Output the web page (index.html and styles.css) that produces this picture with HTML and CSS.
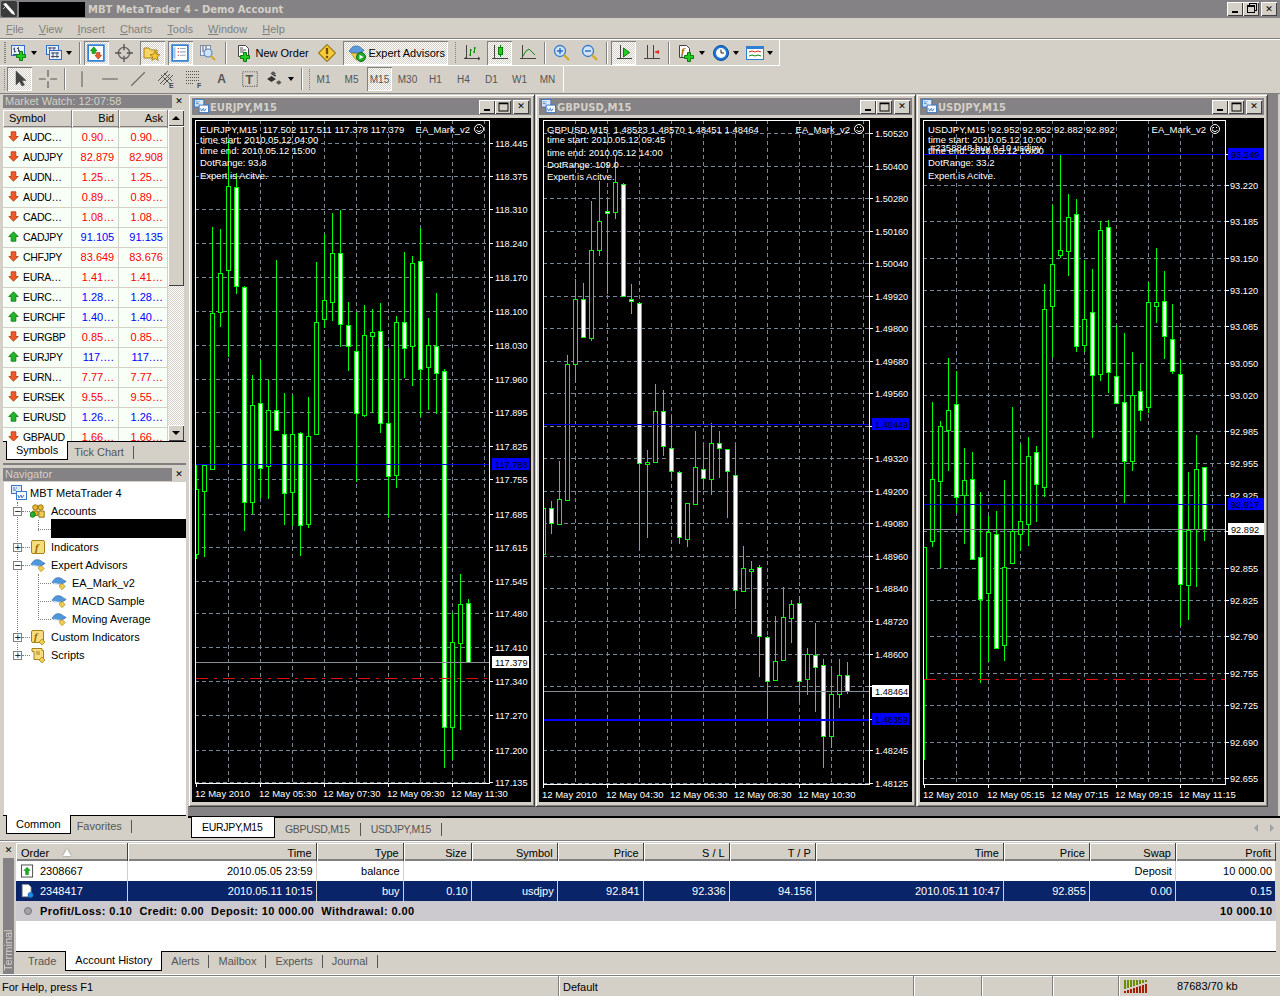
FILE: index.html
```html
<!DOCTYPE html>
<html lang="en">
<head>
  <meta charset="UTF-8" />
  <title>MBT MetaTrader 4 - Demo Account</title>
  <link rel="stylesheet" href="styles.css">
</head>
<body>
  <svg class="sprite">
    <symbol id="i-app" viewBox="0 0 16 16"><rect width="16" height="16" rx="2" fill="#3a3a3a"/><path d="M2 3l3-1 8 9 1 3-3-1z" fill="#fff"/><path d="M2 8l3-3" stroke="#bbb"/></symbol>
    <symbol id="i-logo" viewBox="0 0 16 16"><rect x=".5" y=".5" width="10" height="8" fill="#dfeaf8" stroke="#3a78c8"/><rect x="5.5" y="6.5" width="10" height="8" fill="#fff" stroke="#3a78c8"/><path d="M2 3h2M5 3h1M2 5h3M7 10l1 3 2-3 1 3 2-3" stroke="#3a78c8" fill="none"/></symbol>
    <symbol id="i-new" viewBox="0 0 18 18"><rect x="1.5" y="1.5" width="13" height="10" fill="#e8f0fc" stroke="#2f6fc4"/><path d="M4.5 3.5v5M3 5h1.5M4.5 7.5H6M8.5 3v5M7 4.5h1.5M8.5 6.5H10M3 10.5h10" stroke="#456" fill="none"/><path d="M9.5 7.5h3v3h3v3h-3v3h-3v-3h-3v-3h3z" fill="#22cc22" stroke="#0a7d0a"/></symbol>
    <symbol id="i-prof" viewBox="0 0 18 18"><rect x="1.5" y="1.5" width="12" height="9" fill="#e8f0fc" stroke="#2f6fc4"/><path d="M3 4h8M5 3v3M9 3v3" stroke="#456"/><rect x="4.5" y="6.5" width="12" height="9" fill="#e8f0fc" stroke="#2f6fc4"/><path d="M6 9h8M6 12.5h8M8 8v6M12 8v6" stroke="#456"/></symbol>
    <symbol id="i-mw" viewBox="0 0 16 16"><rect x="1" y="1" width="14" height="14" fill="#fff" stroke="#2f7fd4" stroke-width="1.5"/><path d="M6 2.5l3 3.5H7.5v2.5h-3V6H3z" fill="#1cb01c" stroke="#0a6d0a" stroke-width=".5"/><path d="M10 13.5L7 10h1.5V7.5h3V10H13z" fill="#ef5a2a" stroke="#a02a0a" stroke-width=".5"/></symbol>
    <symbol id="i-target" viewBox="0 0 16 16"><circle cx="8" cy="8" r="5" fill="none" stroke="#666" stroke-width="1.3"/><path d="M8 0v5.5M8 10.5V16M0 8h5.5M10.5 8H16" stroke="#555" stroke-width="1.2"/></symbol>
    <symbol id="i-folder" viewBox="0 0 18 16"><path d="M1 3h5l2 2h6v8H1z" fill="#f6d465" stroke="#a8801a"/><path d="M12 6l1.5 3.2 3.5.4-2.600 2.300.8 3.500-3.200-1.800-3.200 1.800.8-3.500-2.600-2.300 3.500-.4z" fill="#f2c531" stroke="#8e6d12" stroke-width=".7"/></symbol>
    <symbol id="i-term" viewBox="0 0 16 16"><rect x="1" y="1" width="14" height="14" fill="#fff" stroke="#2f7fd4" stroke-width="1.5"/><path d="M3 3v10" stroke="#9cc4ee" stroke-width="2"/><path d="M6 4h1M6 7h1M6 10h1" stroke="#d03020"/><path d="M8 4h5M8 7h5M8 10h5" stroke="#9ca8c0"/></symbol>
    <symbol id="i-test" viewBox="0 0 18 18"><rect x="1.5" y="1.5" width="10" height="10" fill="#eef2fa" stroke="#7a8ba8"/><path d="M4 2v6M7 2v6" stroke="#556"/><circle cx="9" cy="9" r="4" fill="#cfe4fa" stroke="#5b88c0" stroke-width="1.2"/><path d="M12 12l4 4" stroke="#d8a820" stroke-width="2"/></symbol>
    <symbol id="i-order" viewBox="0 0 16 18"><path d="M2.5 1.5h7l3 3v8h-10z" fill="#fff" stroke="#444"/><path d="M4 6h6M4 8h4M4 4h3" stroke="#555"/><path d="M7.5 8.5h3v3h3v3h-3v3h-3v-3h-3v-3h3z" fill="#22cc22" stroke="#0a7d0a"/></symbol>
    <symbol id="i-warn" viewBox="0 0 16 16"><path d="M8 .5L15.5 8 8 15.5.5 8z" fill="#f5cc3c" stroke="#9c7a10"/><path d="M8 3.5V9" stroke="#7a4a00" stroke-width="2"/><path d="M8 10.5v2" stroke="#7a4a00" stroke-width="2"/></symbol>
    <symbol id="i-ea" viewBox="0 0 18 18"><path d="M1 7c2-1 2-5 7-5s5 3 8 4c-1 2-4 3-7 3S2 9 1 7z" fill="#5a9ad8" stroke="#2a5f98" stroke-width=".7"/><path d="M3 9l5 7 3-1 3-5z" fill="#f0cc50" stroke="#a08018" stroke-width=".7"/><circle cx="13" cy="13" r="4.5" fill="#22a92e" stroke="#0c6e14"/><path d="M11.5 10.8l4 2.2-4 2.2z" fill="#fff"/></symbol>
    <symbol id="i-hat" viewBox="0 0 18 16"><path d="M1 7c2-1 2-5 7-5s5 3 9 4c-1 2-5 3-8 3S2 9 1 7z" fill="#4f97dc" stroke="#2a5f98" stroke-width=".7"/><path d="M3 8c2 1 6 2 8 1" stroke="#f0f6ff" fill="none"/><path d="M10 9.5l3-.5 3 3-3.5 3.5-3-3z" fill="#f0cc50" stroke="#a08018" stroke-width=".7"/></symbol>
    <symbol id="i-bars" viewBox="0 0 18 18"><path d="M3.5 1v14M1 14.5h16M3 13l-1.5 2M15 13l2 1.5-2 1.5" stroke="#444" fill="none"/><path d="M7.5 5v7M7.5 11H6M7.5 6H9M11.5 3v6M11.5 8H10M11.5 4H13" stroke="#0a8a0a" fill="none"/></symbol>
    <symbol id="i-candle" viewBox="0 0 18 18"><path d="M3.5 1v14M1 14.5h16" stroke="#444" fill="none"/><path d="M9.5 1v12" stroke="#0a8a0a"/><rect x="7.5" y="3.5" width="4" height="7" fill="#22cc22" stroke="#0a7d0a"/></symbol>
    <symbol id="i-line" viewBox="0 0 18 18"><path d="M3.5 1v14M1 14.5h16" stroke="#444" fill="none"/><path d="M4 12l3-5 3-2 3 3 3 3" stroke="#0a8a0a" fill="none"/></symbol>
    <symbol id="i-zin" viewBox="0 0 18 18"><circle cx="7" cy="7" r="5.5" fill="#cfe4fa" stroke="#3a78c8" stroke-width="1.3"/><path d="M4 7h6M7 4v6" stroke="#2a68b8" stroke-width="1.4"/><path d="M11 11l5 5" stroke="#d8a820" stroke-width="2.4"/></symbol>
    <symbol id="i-zout" viewBox="0 0 18 18"><circle cx="7" cy="7" r="5.5" fill="#cfe4fa" stroke="#3a78c8" stroke-width="1.3"/><path d="M4 7h6" stroke="#2a68b8" stroke-width="1.4"/><path d="M11 11l5 5" stroke="#d8a820" stroke-width="2.4"/></symbol>
    <symbol id="i-auto" viewBox="0 0 18 18"><path d="M5.5 1v14M2 14.5h15" stroke="#444" fill="none"/><path d="M8.5 4l6 4.500-6 4.500z" fill="#22cc22" stroke="#0a7d0a"/></symbol>
    <symbol id="i-shift" viewBox="0 0 18 18"><path d="M4.5 1v14M1 14.5h16M10.5 1v14" stroke="#444" fill="none"/><path d="M11 8l5-2v4z" fill="#e03020"/></symbol>
    <symbol id="i-ind" viewBox="0 0 18 18"><path d="M1.5 1.5h7l3 3v9h-10z" fill="#fff" stroke="#444"/><text class="ic-f" x="3" y="11">f</text><path d="M9.5 8.5h3v3h3v3h-3v3h-3v-3h-3v-3h3z" fill="#22cc22" stroke="#0a7d0a"/></symbol>
    <symbol id="i-clock" viewBox="0 0 18 18"><circle cx="9" cy="9" r="7.5" fill="#1e78d8" stroke="#124a90"/><circle cx="9" cy="9" r="5" fill="#fff"/><path d="M9 5.5V9h3" stroke="#222" fill="none"/></symbol>
    <symbol id="i-tpl" viewBox="0 0 18 16"><rect x=".5" y="1.5" width="17" height="13" fill="#fff" stroke="#2f7fd4"/><path d="M1 3h16" stroke="#2f7fd4" stroke-width="2"/><path d="M3 7l3-1 3 1 3-1 3 1" stroke="#d03020" fill="none"/><path d="M3 11l3-1 3 1 3-1 3 1" stroke="#0a8a0a" fill="none"/></symbol>
    <symbol id="i-cursor" viewBox="0 0 16 18"><path d="M4 1v14l3.5-3.5L10 16l2.500-1-2.500-4.500h4z" fill="#444" stroke="#444" stroke-width=".5"/></symbol>
    <symbol id="i-cross" viewBox="0 0 16 16"><path d="M8 0v6M8 10v6M0 8h6M10 8h6" stroke="#555"/></symbol>
    <symbol id="i-vline" viewBox="0 0 16 16"><path d="M8 1v14" stroke="#666"/></symbol>
    <symbol id="i-hline" viewBox="0 0 16 16"><path d="M1 8h14" stroke="#666"/></symbol>
    <symbol id="i-trend" viewBox="0 0 16 16"><path d="M2 14L14 2" stroke="#666"/></symbol>
    <symbol id="i-chan" viewBox="0 0 18 18"><path d="M1 11L11 1M3 14L13 4M6 15L16 5M4 5l9 9M7 3l8 8" stroke="#555" fill="none"/><text class="ic-tag" x="12" y="18">E</text></symbol>
    <symbol id="i-fibo" viewBox="0 0 18 18"><path d="M1 1.5h13M1 4.5h13M1 7.5h13M1 10.5h13M1 13.5h8" stroke="#555" stroke-dasharray="1 1"/><text class="ic-tag" x="12" y="18">F</text></symbol>
    <symbol id="i-tbox" viewBox="0 0 16 16"><rect x="1.5" y="1.5" width="13" height="13" fill="none" stroke="#666" stroke-dasharray="1 1"/><text class="ic-t" x="4" y="12.5">T</text></symbol>
    <symbol id="i-arrows" viewBox="0 0 16 16"><path d="M3 3l2.5-2L8 3 5.5 5zM8 11l2.500-2 2.500 2-2.500 2z" fill="#555"/><path d="M1 8l3-2 3 2-3 2zM6 5h2" fill="#333" stroke="#333"/></symbol>
    <symbol id="i-down" viewBox="0 0 14 14"><path d="M7 13L1 7h3V1h6v6h3z" fill="#ef5a2a" stroke="#a8380f"/></symbol>
    <symbol id="i-up" viewBox="0 0 14 14"><path d="M7 1l6 6h-3v6H4V7H1z" fill="#21b52a" stroke="#0c7012"/></symbol>
    <symbol id="i-people" viewBox="0 0 18 16"><circle cx="6" cy="4" r="3" fill="#e8b828" stroke="#8a6a10"/><circle cx="12" cy="4" r="3" fill="#e8b828" stroke="#8a6a10"/><path d="M3 8h6v5H3z" fill="#e8b828" stroke="#8a6a10"/><path d="M10 8h6v7h-6z" fill="#f0cc50" stroke="#8a6a10"/><circle cx="3" cy="12" r="3" fill="#22b52e" stroke="#0c7012"/></symbol>
    <symbol id="i-fbook" viewBox="0 0 16 16"><rect x="1.5" y="1.5" width="13" height="13" rx="1.5" fill="#f6de80" stroke="#a8801a"/><text class="ic-fb" x="5" y="12">f</text></symbol>
    <symbol id="i-fcust" viewBox="0 0 16 16"><rect x="1.5" y="1.5" width="12" height="12" rx="1.5" fill="#f6de80" stroke="#a8801a"/><text class="ic-fb" x="4" y="11">f</text><path d="M12 10l3 3-3 3-3-3z" fill="#f0cc50" stroke="#a08018" stroke-width=".7"/></symbol>
    <symbol id="i-script" viewBox="0 0 16 16"><path d="M2 1.5h10v2h1.5v8h-2.500M2 1.5v3H4v8h8" fill="#f6de80" stroke="#a8801a"/><path d="M6 5h4M6 7h4" stroke="#a8801a"/><path d="M12 10l3 3-3 3-3-3z" fill="#f0cc50" stroke="#a08018" stroke-width=".7"/></symbol>
    <symbol id="i-balance" viewBox="0 0 14 14"><rect x=".5" y=".5" width="12" height="13" fill="#fff" stroke="#444"/><path d="M6.5 3l3.5 3.5H8V11H5V6.5H3z" fill="#1cb01c" stroke="#0a6d0a" stroke-width=".5"/></symbol>
    <symbol id="i-doc" viewBox="0 0 14 16"><path d="M1 .5h7l3 3v11H1z" fill="#fff" stroke="#999"/><circle cx="10.5" cy="12.5" r="3" fill="#1c90e8" stroke="#0a5aa8" stroke-width=".6"/></symbol>
    <symbol id="i-gray" viewBox="0 0 10 10"><circle cx="5" cy="5" r="3.5" fill="#a4a2a8" stroke="#777"/></symbol>
  </svg>

  <div class="titlebar">
    <svg class="app-icon"><use href="#i-app"/></svg>
    <span class="redact"></span>
    <span>MBT MetaTrader 4 - Demo Account</span>
    <div class="winbtns main-btns">
      <span class="wbtn"><i class="g-min"></i></span>
      <span class="wbtn"><i class="g-rest"></i></span>
      <span class="wbtn close-gap"><i class="g-x">✕</i></span>
    </div>
  </div>

  <div class="menubar">
    <span><u>F</u>ile</span>
    <span><u>V</u>iew</span>
    <span><u>I</u>nsert</span>
    <span><u>C</u>harts</span>
    <span><u>T</u>ools</span>
    <span><u>W</u>indow</span>
    <span><u>H</u>elp</span>
  </div>

  <div class="toolbars">
    <div class="tbrow row1">
      <span class="grip"></span>
      <span class="tb w31"><svg class="ic"><use href="#i-new"/></svg><b class="arr"></b></span>
      <span class="tb w31"><svg class="ic"><use href="#i-prof"/></svg><b class="arr"></b></span>
      <span class="sep"></span>
      <span class="tb on"><svg class="ic"><use href="#i-mw"/></svg></span>
      <span class="tb"><svg class="ic"><use href="#i-target"/></svg></span>
      <span class="tb on"><svg class="ic"><use href="#i-folder"/></svg></span>
      <span class="tb on"><svg class="ic"><use href="#i-term"/></svg></span>
      <span class="tb"><svg class="ic"><use href="#i-test"/></svg></span>
      <span class="sep"></span>
      <span class="tb label w82"><svg class="ic"><use href="#i-order"/></svg>New Order</span>
      <span class="tb"><svg class="ic"><use href="#i-warn"/></svg></span>
      <span class="tb label on w105"><svg class="ic"><use href="#i-ea"/></svg>Expert Advisors</span>
      <span class="grip mid"></span>
      <span class="tb"><svg class="ic"><use href="#i-bars"/></svg></span>
      <span class="tb on"><svg class="ic"><use href="#i-candle"/></svg></span>
      <span class="tb"><svg class="ic"><use href="#i-line"/></svg></span>
      <span class="sep"></span>
      <span class="tb"><svg class="ic"><use href="#i-zin"/></svg></span>
      <span class="tb"><svg class="ic"><use href="#i-zout"/></svg></span>
      <span class="sep"></span>
      <span class="tb on"><svg class="ic"><use href="#i-auto"/></svg></span>
      <span class="tb"><svg class="ic"><use href="#i-shift"/></svg></span>
      <span class="sep wide"></span>
      <span class="tb w29"><svg class="ic"><use href="#i-ind"/></svg><b class="arr"></b></span>
      <span class="tb w29"><svg class="ic"><use href="#i-clock"/></svg><b class="arr"></b></span>
      <span class="tb w29"><svg class="ic"><use href="#i-tpl"/></svg><b class="arr"></b></span>
    </div>
    <div class="tbrow row2">
      <span class="grip"></span>
      <span class="tb on"><svg class="ic"><use href="#i-cursor"/></svg></span>
      <span class="tb"><svg class="ic"><use href="#i-cross"/></svg></span>
      <span class="sep"></span>
      <span class="tb"><svg class="ic"><use href="#i-vline"/></svg></span>
      <span class="tb"><svg class="ic"><use href="#i-hline"/></svg></span>
      <span class="tb"><svg class="ic"><use href="#i-trend"/></svg></span>
      <span class="tb"><svg class="ic"><use href="#i-chan"/></svg></span>
      <span class="tb"><svg class="ic"><use href="#i-fibo"/></svg></span>
      <span class="tb txt-a">A</span>
      <span class="tb"><svg class="ic"><use href="#i-tbox"/></svg></span>
      <span class="tb w31"><svg class="ic"><use href="#i-arrows"/></svg><b class="arr"></b></span>
      <span class="sep"></span>
      <span class="grip mid2"></span>
      <span class="tb tf">M1</span>
      <span class="tb tf">M5</span>
      <span class="tb tf on">M15</span>
      <span class="tb tf">M30</span>
      <span class="tb tf">H1</span>
      <span class="tb tf">H4</span>
      <span class="tb tf">D1</span>
      <span class="tb tf">W1</span>
      <span class="tb tf">MN</span>
    </div>
  </div>

  <div class="workspace">
    <div class="leftcol">
      <div class="panel market">
        <div class="panel-top"><span class="panel-head">Market Watch: 12:07:58</span><span class="panel-x">✕</span></div>
        <div class="mw-body">
          <div class="mw-list">
            <table class="mw-table">
              <thead>
                <tr><th class="c-sym">Symbol</th><th class="c-num">Bid</th><th class="c-num">Ask</th></tr>
              </thead>
              <tbody>
                <tr class="dn"><td><svg><use href="#i-down"/></svg>AUDC…</td><td>0.90…</td><td>0.90…</td></tr>
                <tr class="dn"><td><svg><use href="#i-down"/></svg>AUDJPY</td><td>82.879</td><td>82.908</td></tr>
                <tr class="dn"><td><svg><use href="#i-down"/></svg>AUDN…</td><td>1.25…</td><td>1.25…</td></tr>
                <tr class="dn"><td><svg><use href="#i-down"/></svg>AUDU…</td><td>0.89…</td><td>0.89…</td></tr>
                <tr class="dn"><td><svg><use href="#i-down"/></svg>CADC…</td><td>1.08…</td><td>1.08…</td></tr>
                <tr class="up"><td><svg><use href="#i-up"/></svg>CADJPY</td><td>91.105</td><td>91.135</td></tr>
                <tr class="dn"><td><svg><use href="#i-down"/></svg>CHFJPY</td><td>83.649</td><td>83.676</td></tr>
                <tr class="dn"><td><svg><use href="#i-down"/></svg>EURA…</td><td>1.41…</td><td>1.41…</td></tr>
                <tr class="up"><td><svg><use href="#i-up"/></svg>EURC…</td><td>1.28…</td><td>1.28…</td></tr>
                <tr class="up"><td><svg><use href="#i-up"/></svg>EURCHF</td><td>1.40…</td><td>1.40…</td></tr>
                <tr class="dn"><td><svg><use href="#i-down"/></svg>EURGBP</td><td>0.85…</td><td>0.85…</td></tr>
                <tr class="up"><td><svg><use href="#i-up"/></svg>EURJPY</td><td>117.…</td><td>117.…</td></tr>
                <tr class="dn"><td><svg><use href="#i-down"/></svg>EURN…</td><td>7.77…</td><td>7.77…</td></tr>
                <tr class="dn"><td><svg><use href="#i-down"/></svg>EURSEK</td><td>9.55…</td><td>9.55…</td></tr>
                <tr class="up"><td><svg><use href="#i-up"/></svg>EURUSD</td><td>1.26…</td><td>1.26…</td></tr>
                <tr class="dn"><td><svg><use href="#i-down"/></svg>GBPAUD</td><td>1.66…</td><td>1.66…</td></tr>
              </tbody>
            </table>
          </div>
          <div class="scrollbar">
            <span class="sb-btn"><b class="tri-up"></b></span>
            <span class="sb-thumb"></span>
            <span class="sb-track"></span>
            <span class="sb-btn"><b class="tri-down"></b></span>
          </div>
        </div>
        <div class="tabs">
          <span class="tab active">Symbols</span>
          <span class="tab first-off">Tick Chart</span>
        </div>
      </div>

      <div class="panel navigator">
        <div class="panel-top"><span class="panel-head">Navigator</span><span class="panel-x">✕</span></div>
        <div class="tree">
          <span class="vl vl-main"></span>
          <span class="vl vl-acct"></span>
          <span class="vl vl-ea"></span>
          <div class="node root"><svg class="ni"><use href="#i-logo"/></svg>MBT MetaTrader 4</div>
          <div class="node"><b class="exp">−</b><i class="twig"></i><svg class="ni"><use href="#i-people"/></svg>Accounts</div>
          <div class="node sub"><i class="twig long"></i><span class="acct-redact"></span></div>
          <div class="node"><b class="exp">+</b><i class="twig"></i><svg class="ni"><use href="#i-fbook"/></svg>Indicators</div>
          <div class="node"><b class="exp">−</b><i class="twig"></i><svg class="ni"><use href="#i-hat"/></svg>Expert Advisors</div>
          <div class="node sub"><i class="twig long"></i><svg class="ni"><use href="#i-hat"/></svg>EA_Mark_v2</div>
          <div class="node sub"><i class="twig long"></i><svg class="ni"><use href="#i-hat"/></svg>MACD Sample</div>
          <div class="node sub"><i class="twig long"></i><svg class="ni"><use href="#i-hat"/></svg>Moving Average</div>
          <div class="node"><b class="exp">+</b><i class="twig"></i><svg class="ni"><use href="#i-fcust"/></svg>Custom Indicators</div>
          <div class="node"><b class="exp">+</b><i class="twig"></i><svg class="ni"><use href="#i-script"/></svg>Scripts</div>
        </div>
        <div class="tabs nav-tabs">
          <span class="tab active">Common</span>
          <span class="tab first-off">Favorites</span>
        </div>
      </div>
    </div>

    <div class="rightcol">
      <div class="mdi">
        <div class="win w-eur">
          <div class="win-title"><svg class="ni"><use href="#i-logo"/></svg><span class="win-name">EURJPY,M15</span>
            <div class="winbtns"><span class="wbtn"><i class="g-min"></i></span><span class="wbtn"><i class="g-max"></i></span><span class="wbtn close-gap"><i class="g-x">✕</i></span></div>
          </div>
          <svg class="chart" id="chartEur"></svg>
        </div>
        <div class="win w-gbp">
          <div class="win-title"><svg class="ni"><use href="#i-logo"/></svg><span class="win-name">GBPUSD,M15</span>
            <div class="winbtns"><span class="wbtn"><i class="g-min"></i></span><span class="wbtn"><i class="g-max"></i></span><span class="wbtn close-gap"><i class="g-x">✕</i></span></div>
          </div>
          <svg class="chart" id="chartGbp"></svg>
        </div>
        <div class="win w-usd">
          <div class="win-title"><svg class="ni"><use href="#i-logo"/></svg><span class="win-name">USDJPY,M15</span>
            <div class="winbtns"><span class="wbtn"><i class="g-min"></i></span><span class="wbtn"><i class="g-max"></i></span><span class="wbtn close-gap"><i class="g-x">✕</i></span></div>
          </div>
          <svg class="chart" id="chartUsd"></svg>
        </div>
      </div>
      <div class="ctabs">
        <span class="ctab active">EURJPY,M15</span>
        <span class="ctab">GBPUSD,M15</span>
        <span class="ctab">USDJPY,M15</span>
        <span class="ctab-arrows"><b class="tri-left"></b><b class="tri-right"></b></span>
      </div>
    </div>
  </div>

  <div class="terminal">
    <div class="term-side">
      <span class="panel-x term-x">✕</span>
      <span class="term-label">Terminal</span>
    </div>
    <div class="term-main">
      <div class="term-grid">
        <table class="orders">
          <colgroup>
            <col class="k-order"><col class="k-time"><col class="k-type"><col class="k-size"><col class="k-num"><col class="k-num"><col class="k-num"><col class="k-num"><col class="k-time2"><col class="k-num"><col class="k-num"><col class="k-profit">
          </colgroup>
          <thead>
            <tr>
              <th class="left">Order<b class="sort"></b></th><th>Time</th><th>Type</th><th>Size</th><th>Symbol</th><th>Price</th><th>S / L</th><th>T / P</th><th>Time</th><th>Price</th><th>Swap</th><th>Profit</th>
            </tr>
          </thead>
          <tbody>
            <tr>
              <td class="left"><svg class="oi"><use href="#i-balance"/></svg>2308667</td><td>2010.05.05 23:59</td><td>balance</td><td class="nb" colspan="7"></td><td>Deposit</td><td>10 000.00</td>
            </tr>
            <tr class="sel">
              <td class="left"><svg class="oi"><use href="#i-doc"/></svg>2348417</td><td>2010.05.11 10:15</td><td>buy</td><td>0.10</td><td>usdjpy</td><td>92.841</td><td>92.336</td><td>94.156</td><td>2010.05.11 10:47</td><td>92.855</td><td>0.00</td><td>0.15</td>
            </tr>
            <tr class="sum">
              <td colspan="11"><div class="sum-line"><svg class="oi gray"><use href="#i-gray"/></svg><span>Profit/Loss: 0.10</span><span>Credit: 0.00</span><span>Deposit: 10 000.00</span><span>Withdrawal: 0.00</span></div></td>
              <td>10 000.10</td>
            </tr>
          </tbody>
        </table>
      </div>
      <div class="tabs term-tabs">
        <span class="tab first-off t-trade">Trade</span>
        <span class="tab active">Account History</span>
        <span class="tab off">Alerts</span>
        <span class="tab off">Mailbox</span>
        <span class="tab off">Experts</span>
        <span class="tab off">Journal</span>
      </div>
    </div>
  </div>

  <div class="statusbar">
    <span class="st st-help">For Help, press F1</span>
    <span class="st st-default">Default</span>
    <span class="st st-a"></span>
    <span class="st st-b"></span>
    <span class="st st-c"></span>
    <span class="st st-net">
      <svg class="netbars" width="24" height="13"><path d="M0 0h2v9H0zM3 0h2v8H3zM6 0h2v7H6zM9 0h2v6H9zM12 0h2v5h-2zM15 0h2v4h-2zM18 0h2v3h-2zM21 0h2v2h-2z" fill="#6b8e00"/><path d="M0 11h2v2H0zM3 10h2v3H3zM6 9h2v4H6zM9 8h2v5H9zM12 7h2v6h-2zM15 6h2v7h-2zM18 5h2v8h-2zM21 4h2v9h-2z" fill="#a81c00"/></svg>
      <span>87683/70 kb</span>
    </span>
  </div>

  <script src="chart.js"></script>
</body>
</html>
```

FILE: styles.css
```css
body {
  margin: 0;
  width: 1280px;
  height: 996px;
  overflow: hidden;
  display: flex;
  flex-direction: column;
  background: #d4d0c8;
  color: #000;
  font: 11px "Liberation Sans", Arial, sans-serif;
}

.sprite {
  display: none;
}

.ic-f, .ic-fb {
  font: italic bold 11px "Liberation Serif", serif;
  fill: #9a6a00;
}

.ic-tag {
  font: bold 7px "Liberation Sans", sans-serif;
  fill: #444;
}

.ic-t {
  font: bold 11px "Liberation Sans", sans-serif;
  fill: #555;
}

/* main title */
.titlebar {
  height: 18px;
  flex: none;
  display: flex;
  align-items: center;
  background: #848284;
  color: #d4d0c8;
  font: bold 10px "DejaVu Sans", sans-serif;
}

.app-icon {
  width: 16px;
  height: 16px;
  margin-left: 1px;
}

.redact {
  width: 66px;
  height: 15px;
  margin: 0 3px 0 2px;
  background: #000;
}

.winbtns {
  display: flex;
  margin-left: auto;
}

.main-btns {
  margin-right: 3px;
}

.wbtn {
  width: 16px;
  height: 14px;
  box-sizing: border-box;
  display: flex;
  align-items: center;
  justify-content: center;
  background: #d4d0c8;
  box-shadow: inset 1px 1px #fff, inset -1px -1px #404040;
  color: #000;
}

.close-gap {
  margin-left: 2px;
}

.g-min {
  width: 6px;
  height: 2px;
  background: #000;
  margin-top: 6px;
}

.g-max {
  width: 9px;
  height: 7px;
  border: 1px solid #000;
  border-top-width: 2px;
  box-sizing: content-box;
  transform: scale(.9);
}

.g-rest {
  width: 6px;
  height: 5px;
  border: 1px solid #000;
  border-top-width: 2px;
  box-shadow: 2px -2px 0 -1px #d4d0c8, 2px -2px 0 0 #000;
}

.g-x {
  font: bold 9px "DejaVu Sans", sans-serif;
  line-height: 1;
}

/* menu */
.menubar {
  height: 21px;
  flex: none;
  box-sizing: border-box;
  display: flex;
  align-items: center;
  gap: 15px;
  padding-left: 6px;
  color: #808080;
}

/* toolbars */
.toolbars {
  height: 54px;
  flex: none;
  box-sizing: border-box;
  border-top: 1px solid #fff;
  box-shadow: 0 -1px #808080;
}

.tbrow {
  height: 26px;
  display: flex;
  align-items: center;
  box-sizing: border-box;
  width: max-content;
  border-right: 1px solid #fff;
  border-bottom: 1px solid #fff;
}

.row1 {
  width: 780px;
}

.row2 {
  width: 564px;
  border-bottom: none;
}

.grip {
  width: 3px;
  height: 21px;
  margin-left: 4px;
  margin-right: 2px;
  background: repeating-linear-gradient(#808080 0 1px, transparent 1px 2px);
}

.grip.mid {
  margin-left: 4px;
  margin-right: 3px;
}

.grip.mid2 {
  margin-left: 3px;
  margin-right: 1px;
}

.tb {
  width: 25px;
  height: 24px;
  flex: none;
  display: flex;
  align-items: center;
  justify-content: center;
  margin-right: 3px;
  box-sizing: border-box;
}

.tb.on {
  background: repeating-conic-gradient(#fff 0 25%, #d4d0c8 0 50%) 0 0 / 2px 2px;
  box-shadow: inset 1px 1px #808080, inset -1px -1px #fff;
}

.w29 {
  width: 29px;
  margin-right: 5px;
}

.w31 {
  width: 31px;
  margin-right: 4px;
}

.w82 {
  width: 82px;
}

.w105 {
  width: 105px;
}

.label {
  justify-content: flex-start;
  gap: 3px;
  padding-left: 5px;
}

.ic {
  width: 18px;
  height: 18px;
  flex: none;
}

.arr {
  width: 0;
  height: 0;
  margin-left: 3px;
  border: 3px solid transparent;
  border-top: 4px solid #000;
  border-bottom: 0;
}

.sep {
  width: 1px;
  height: 22px;
  flex: none;
  margin: 0 3px 0 1px;
  background: #808080;
  border-right: 1px solid #fff;
}

.sep.wide {
  margin-right: 7px;
}

.txt-a {
  font-weight: bold;
  font-size: 12px;
  color: #555;
}

.tf {
  color: #555;
  font-size: 10px;
}

/* main area */
.workspace {
  height: 747px;
  flex: none;
  display: flex;
  border-top: 1px solid #808080;
  box-sizing: border-box;
}

.leftcol {
  width: 188px;
  flex: none;
  padding: 0 2px 0 3px;
  box-sizing: border-box;
}

.panel-top {
  display: flex;
  align-items: center;
  height: 14px;
  margin-bottom: 1px;
}

.market .panel-top {
  margin-bottom: 2px;
}

.panel-head {
  flex: 1;
  height: 13px;
  line-height: 13px;
  padding-left: 2px;
  background: #848284;
  color: #d4d0c8;
}

.panel-x {
  width: 14px;
  text-align: center;
  font: bold 9px "DejaVu Sans", sans-serif;
}

.market {
  height: 371px;
  box-sizing: border-box;
  border-bottom: 2px solid #808080;
}

.mw-body {
  display: flex;
  height: 331px;
}

.mw-list {
  width: 165px;
  overflow: hidden;
  background: #f7fff7;
}

.mw-table {
  border-collapse: collapse;
  table-layout: fixed;
  width: 165px;
}

.mw-table th {
  height: 17px;
  padding: 0 4px;
  box-sizing: border-box;
  background: #d4d0c8;
  font-weight: normal;
  text-align: right;
  border-right: 1px solid #808080;
  box-shadow: inset 1px 1px #fff, inset 0 -1px #808080;
}

.mw-table .c-sym {
  width: 67px;
  text-align: left;
  padding-left: 6px;
}

.mw-table .c-num {
  width: 47px;
}

.mw-table .c-num:last-child {
  width: 48px;
}

.mw-table td {
  height: 20px;
  padding: 0 4px 0 0;
  box-sizing: border-box;
  text-align: right;
  border: 1px solid #d4d0c8;
  border-left: 0;
  white-space: nowrap;
  overflow: hidden;
}

.mw-table td:first-child {
  text-align: left;
  padding: 0;
  font-size: 10.5px;
  letter-spacing: -.3px;
}

.mw-table td svg {
  width: 11px;
  height: 11px;
  margin: 0 4px 0 5px;
  vertical-align: -1px;
}

.mw-table .dn td {
  color: #f00;
}

.mw-table .up td {
  color: #00f;
}

.mw-table .dn td:first-child,
.mw-table .up td:first-child {
  color: #000;
}

.scrollbar {
  width: 16px;
  margin-left: 0;
  display: flex;
  flex-direction: column;
  background: repeating-conic-gradient(#fff 0 25%, #d4d0c8 0 50%) 0 0 / 2px 2px;
}

.sb-btn {
  height: 16px;
  flex: none;
  box-sizing: border-box;
  display: flex;
  align-items: center;
  justify-content: center;
  background: #d4d0c8;
  box-shadow: inset 1px 1px #fff, inset -1px -1px #404040;
}

.sb-thumb {
  height: 160px;
  flex: none;
  background: #d4d0c8;
  box-shadow: inset 1px 1px #fff, inset -1px -1px #404040;
}

.sb-track {
  flex: 1;
}

.tri-up, .tri-down, .tri-left, .tri-right {
  width: 0;
  height: 0;
  border: 4px solid transparent;
}

.tri-up {
  border-bottom: 4px solid #000;
  border-top: 0;
}

.tri-down {
  border-top: 4px solid #000;
  border-bottom: 0;
}

.tri-left {
  border-right: 4px solid #a0a0a0;
  border-left: 0;
}

.tri-right {
  border-left: 4px solid #a0a0a0;
  border-right: 0;
}

.tabs {
  display: flex;
  height: 18px;
  align-items: center;
  padding-left: 3px;
  border-top: 1px solid #000;
  color: #555;
}

.tab {
  height: 18px;
  line-height: 17px;
  padding: 0 9px 0 9px;
  box-sizing: border-box;
}

.tab.active {
  background: #fff;
  color: #000;
  margin-top: -1px;
  border: 1px solid #000;
  border-top: 0;
  line-height: 19px;
  height: 19px;
}

.tab.first-off,
.tab.off {
  border-right: 1px solid #555;
  height: 13px;
  line-height: 13px;
  margin-top: 2px;
}

.tab.first-off {
  padding-left: 6px;
}

.navigator {
  height: 371px;
  margin-top: 2px;
  box-sizing: border-box;
}

.tree {
  position: relative;
  height: 333px;
  padding-top: 2px;
  box-sizing: border-box;
  background: #fff;
  margin-left: 1px;
}

.vl {
  position: absolute;
  border-left: 1px dotted #808080;
}

.vl-main {
  left: 13px;
  top: 20px;
  height: 152px;
}

.vl-acct {
  left: 34px;
  top: 38px;
  height: 11px;
}

.vl-ea {
  left: 34px;
  top: 92px;
  height: 46px;
}

.node {
  height: 18px;
  display: flex;
  align-items: center;
  padding-left: 9px;
  white-space: nowrap;
}

.node.root {
  padding-left: 7px;
}

.node.root .ni {
  margin-right: 3px;
}

.node.sub {
  padding-left: 34px;
}

.exp {
  position: relative;
  width: 9px;
  height: 9px;
  flex: none;
  box-sizing: border-box;
  border: 1px solid #808080;
  background: #fff;
  color: #000;
  font: normal 9px/7px "DejaVu Sans", sans-serif;
  text-align: center;
}

.twig {
  width: 8px;
  flex: none;
  border-top: 1px dotted #808080;
}

.twig.long {
  width: 13px;
}

.ni {
  width: 16px;
  height: 16px;
  flex: none;
  margin-right: 5px;
}

.acct-redact {
  flex: 1;
  height: 19px;
  margin-top: -2px;
  background: #000;
}

.rightcol {
  flex: 1;
  min-width: 0;
  display: flex;
  flex-direction: column;
}

.mdi {
  height: 722px;
  flex: none;
  display: flex;
  align-items: flex-start;
  background: #848284;
  border-right: 2px solid #d4d0c8;
}

.win {
  height: 713px;
  flex: none;
  box-sizing: border-box;
  padding: 3px;
  background: #d4d0c8;
  border: 1px solid;
  border-color: #d4d0c8 #404040 #404040 #d4d0c8;
  box-shadow: inset 1px 1px #fff, inset -1px -1px #808080;
}

.w-eur {
  width: 347px;
}

.w-gbp {
  width: 381px;
}

.w-usd {
  width: 352px;
}

.win-title {
  height: 17px;
  margin-bottom: 3px;
  display: flex;
  align-items: center;
  padding-right: 2px;
  background: #848284;
  color: #d4d0c8;
  font: bold 10px "DejaVu Sans", sans-serif;
}

.win-title .ni {
  margin: 0 1px 0 2px;
  width: 15px;
  height: 15px;
}

.win-name {
  margin-top: 2px;
}

.chart {
  display: block;
  width: 100%;
  height: 684px;
  background: #000;
  shape-rendering: crispEdges;
}

.ch-text {
  fill: #fff;
  font: 9.5px "Liberation Sans", sans-serif;
  shape-rendering: auto;
}

.ch-price {
  font-size: 9.2px;
}

.ch-mark {
  fill: #000;
}

.ctabs {
  height: 22px;
  flex: none;
  display: flex;
  align-items: center;
  box-sizing: border-box;
  padding-left: 3px;
  border-top: 2px solid #000;
  color: #555;
  font-size: 10.5px;
  letter-spacing: -.3px;
}

.ctab {
  height: 13px;
  line-height: 13px;
  padding: 0 10px;
  border-right: 1px solid #555;
  margin-top: 2px;
}

.ctab.active {
  height: 20px;
  line-height: 21px;
  width: 62px;
  background: #fff;
  color: #000;
  border: 1px solid #000;
  border-top: 0;
  margin-top: -1px;
}

.ctab-arrows {
  margin-left: auto;
  margin-right: 6px;
  display: flex;
  gap: 12px;
}

/* terminal */
.terminal {
  height: 134px;
  flex: none;
  display: flex;
  box-sizing: border-box;
  border-top: 1px solid #808080;
  padding-right: 4px;
  box-shadow: inset 0 1px #fff;
}

.term-side {
  width: 16px;
  flex: none;
  padding-left: 3px;
  box-sizing: border-box;
  display: flex;
  flex-direction: column;
}

.term-x {
  width: 11px;
  height: 16px;
  line-height: 16px;
  margin-top: 1px;
}

.term-label {
  flex: 1;
  width: 11px;
  padding-top: 3px;
  box-sizing: border-box;
  background: #848284;
  color: #d4d0c8;
  writing-mode: vertical-rl;
  transform: rotate(180deg);
  text-align: left;
  line-height: 11px;
}

.term-main {
  flex: 1;
  min-width: 0;
  display: flex;
  flex-direction: column;
  padding-top: 2px;
}

.term-grid {
  height: 108px;
  background: #fff;
  border-bottom: 1px solid #000;
}

.orders {
  width: 100%;
  border-collapse: collapse;
  table-layout: fixed;
}

.k-order { width: 111px; }
.k-time { width: 189px; }
.k-type { width: 87px; }
.k-size { width: 68px; }
.k-num { width: 86px; }
.k-time2 { width: 188px; }
.k-profit { width: 100px; }

.orders th {
  height: 18px;
  padding: 1px 4px 0;
  box-sizing: border-box;
  background: #d4d0c8;
  font-weight: normal;
  text-align: right;
  border-right: 1px solid #404040;
  box-shadow: inset 1px 1px #fff, inset 0 -2px #808080;
  white-space: nowrap;
}

.orders td {
  height: 20px;
  padding: 0 3px 0 0;
  box-sizing: border-box;
  text-align: right;
  border-right: 1px solid #d4d0c8;
  white-space: nowrap;
}

.orders .left {
  text-align: left;
  padding-left: 5px;
}

.orders td.nb {
  border-right: 0;
}

.oi {
  width: 13px;
  height: 14px;
  margin-right: 6px;
  vertical-align: -3px;
}

.sort {
  display: inline-block;
  width: 0;
  height: 0;
  margin-left: 14px;
  border: 4px solid transparent;
  border-bottom: 7px solid #fff;
  border-top: 0;
  vertical-align: 1px;
  filter: drop-shadow(0 0 1px #808080);
}

.orders .sel td {
  background: #0a246a;
  color: #fff;
}

.orders .sum td {
  background: #ccc9cf;
  font-weight: bold;
  letter-spacing: .4px;
  border-right: 0;
}

.sum-line {
  display: flex;
  align-items: center;
  gap: 7px;
  padding-left: 7px;
  text-align: left;
}

.sum-line .gray {
  width: 10px;
  height: 10px;
  margin-right: 0;
  vertical-align: 0;
}

.term-tabs {
  border-top: 0;
  height: 21px;
  padding-left: 3px;
  align-items: flex-start;
}

.term-tabs .tab.active {
  margin-top: -1px;
  height: 20px;
  line-height: 18px;
}

.term-tabs .tab.first-off,
.term-tabs .tab.off {
  margin-top: 3px;
}

.term-tabs .t-trade {
  border-right: 0;
  padding-left: 9px;
}

/* status */
.statusbar {
  height: 21px;
  flex: none;
  display: flex;
  align-items: center;
  box-sizing: border-box;
  margin-top: 1px;
  border-top: 1px solid #808080;
  box-shadow: 0 -1px #fff, inset 0 1px #fff;
}

.st {
  height: 20px;
  line-height: 22px;
  padding-left: 4px;
  box-sizing: border-box;
  border-left: 1px solid #808080;
  box-shadow: inset 1px 0 #fff;
}

.st-help {
  width: 558px;
  padding-left: 2px;
  border-left: 0;
  box-shadow: none;
}

.st-default { width: 355px; }
.st-a { width: 68px; }
.st-b { width: 71px; }
.st-c { width: 66px; }

.st-net {
  flex: 1;
  display: flex;
  align-items: center;
  padding-left: 5px;
}

.netbars {
  margin-right: 29px;
}
```

FILE: chart.js
```js
// candle rows: [wick top, wick bottom, body top, body bottom, 1 if white]
// x positions step by one bar, y values are read off the 680px tall chart crop
const Y_SCALE = 680 / 1568;
const LAST_LINE = "#868e96";

const charts = [
  {
    id: "chartEur", ox: 0, frame: [10, 892, 1532], first: 13, vStart: 109, tickStart: 13, textX: 23, axisX: 910,
    lines: [45, 72, 100, 128], head: "EURJPY,M15  117.502 117.511 117.378 117.379",
    info: ["time start: 2010.05.12 04:00", "time end: 2010.05.12 15:00", "DotRange: 93.8", "Expert is Acitve."],
    ea: [835, 862],
    grid: [56, 132, 208, 287, 365, 443, 522, 600, 675, 753, 831, 910, 988, 1066, 1140, 1218, 1297, 1375, 1454, 1528],
    prices: ["118.445", "118.375", "118.310", "118.240", "118.170", "118.100", "118.030", "117.960", "117.895", "117.825", "117.755", "117.685", "117.615", "117.545", "117.480", "117.410", "117.340", "117.270", "117.200", "117.135"],
    times: ["12 May 2010", "12 May 05:30", "12 May 07:30", "12 May 09:30", "12 May 11:30"],
    marks: [{ y: 795, c: "#0000e0", bg: "#0000ff", t: "117.788" }, { y: 1252, c: LAST_LINE, bg: "#fff", t: "117.379" }],
    red: 1289,
    candles: [
      [795,1015,853,1002],[797,1010,798,858],[248,808,448,806],[254,480,356,446],[45,548,155,349],
      [125,404,157,385,1],[385,950,388,882,1],[590,910,660,882],[556,873,656,805,1],[601,877,672,800],
      [325,718,670,717,1],[632,936,727,863,1],[636,938,727,859],[722,1008,723,937,1],[641,943,730,933],
      [330,728,469,727],[265,482,418,462],[217,466,308,421],[210,525,310,473,1],[422,581,475,524,1],
      [444,838,536,678,1],[430,686,499,682],[438,678,491,501],[424,724,488,702,1],[528,920,700,824,1],
      [455,851,467,820],[307,597,468,528,1],[316,616,333,524],[252,688,328,577,1],[458,671,522,572],
      [401,680,524,586,1],[576,1497,582,1401,1],[1138,1477,1205,1403],[1050,1409,1119,1209],[1106,1255,1115,1252,1]
    ]
  },
  {
    id: "chartGbp", ox: 1, frame: [8, 988, 1533], first: 10, vStart: 106, tickStart: 10, textX: 20, axisX: 1006,
    lines: [47, 75, 103, 131], head: "GBPUSD,M15  1.48523 1.48570 1.48451 1.48464",
    info: ["time start: 2010.05.12 09:45", "time end: 2010.05.12 14:00", "DotRange: 109.0", "Expert is Acitve."],
    ea: [930, 958],
    grid: [32, 108, 183, 259, 332, 408, 483, 558, 632, 707, 782, 858, 932, 1008, 1082, 1158, 1233, 1308, 1383, 1456, 1530],
    prices: ["1.50520", "1.50400", "1.50280", "1.50160", "1.50040", "1.49920", "1.49800", "1.49680", "1.49560", "", "1.49320", "1.49200", "1.49080", "1.48960", "1.48840", "1.48720", "1.48600", "", "", "1.48245", "1.48125"],
    times: ["12 May 2010", "12 May 04:30", "12 May 06:30", "12 May 08:30", "12 May 10:30"],
    marks: [{ y: 704, c: "#0000e0", bg: "#0000ff", t: "1.49449" }, { y: 1318, c: LAST_LINE, bg: "#fff", t: "1.48464" }, { y: 1383, c: "#0000ff", bg: "#0000ff", t: "1.48359", w: 2 }],
    candles: [
      [862,1027,896,1002],[881,957,896,932,1],[789,935,877,934],[544,880,566,878],[368,608,414,564],
      [378,504,414,503,1],[189,513,303,504],[143,315,236,302],[185,404,213,216,1],[85,230,146,215],
      [148,408,149,407,1],[380,450,414,420,1],[422,993,424,794,1],[763,966,792,796],[611,792,674,791],
      [625,777,674,754,1],[685,826,758,812,1],[812,980,813,964,1],[886,987,886,969],[719,889,803,888],
      [752,855,806,828,1],[702,866,746,830],[719,828,746,759,1],[760,920,762,812,1],[752,1131,820,1086,1],
      [985,1090,1036,1089],[1019,1187,1038,1040],[1028,1287,1034,1192,1],[1193,1385,1195,1296,1],[1146,1296,1249,1294],
      [1080,1250,1149,1248],[1110,1208,1119,1150],[1100,1342,1117,1296,1],[1220,1328,1234,1292],[1162,1367,1237,1264,1],
      [1245,1497,1260,1423,1],[1261,1450,1325,1423],[1245,1358,1281,1327],[1252,1327,1281,1318,1]
    ]
  },
  {
    id: "chartUsd", ox: 0, frame: [10, 914, 1534], first: 13, vStart: 109, tickStart: 13, textX: 23, axisX: 930,
    lines: [45, 72, 100, 128], head: "USDJPY,M15  92.952 92.952 92.882 92.892",
    info: ["time start: 2010.05.12 10:00", "time end: 2010.05.12 16:00", "DotRange: 33.2", "Expert is Acitve."],
    ea: [857, 884], extra: [30, 68, "#2358848 buy 0.10 usdjpy"],
    grid: [80, 152, 236, 321, 395, 478, 563, 637, 720, 793, 868, 951, 1036, 1110, 1193, 1278, 1352, 1436, 1520],
    prices: ["", "93.220", "93.185", "93.150", "93.120", "93.085", "93.050", "93.020", "92.985", "92.955", "92.925", "", "92.855", "92.825", "92.790", "92.755", "92.725", "92.690", "92.655"],
    times: ["12 May 2010", "12 May 05:15", "12 May 07:15", "12 May 09:15", "12 May 11:15"],
    marks: [{ y: 80, c: "#0000e0", bg: "#0000ff", t: "93.249" }, { y: 887, c: "#0000e0", bg: "#0000ff", t: "92.917" }, { y: 946, c: LAST_LINE, bg: "#fff", t: "92.892" }],
    red: 1292,
    candles: [
      [987,1478,987,1292],[653,988,831,973],[696,1035,707,835],[551,812,670,716],[581,908,657,872,1],
      [759,980,833,867],[768,1016,829,1015,1],[860,1300,1011,1106,1],[915,1252,953,1094],[905,1222,958,1220,1],
      [832,1250,1032,1214],[664,1025,951,1024],[750,995,928,958],[733,985,778,933],[754,929,769,842,1],
      [380,871,439,848],[198,551,335,432],[83,321,301,313],[173,362,227,305],[184,537,220,524,1],
      [325,537,462,520],[346,735,445,591,1],[236,604,255,587],[234,632,248,584,1],[474,656,592,656,1],
      [493,885,652,788,1],[537,812,637,788],[564,696,628,670,1],[377,678,423,663],[297,470,423,432],
      [350,553,419,501,1],[427,587,507,582,1],[556,1170,588,1073,1],[813,1155,948,1074],[729,1078,806,945],[802,973,802,945,1]
    ]
  }
];

function drawChart(c) {
  const px = v => Math.round(v / 3) + c.ox;
  const py = v => Math.round(v * Y_SCALE) + 1;
  const left = px(c.frame[0]), right = px(c.frame[1]), bottom = py(c.frame[2]), top = 2;
  let grid = "", candles = "", over = "";

  c.grid.forEach((g, i) => {
    const y = py(g) + 0.5;
    grid += `<path d="M${left} ${y}H${right}" stroke="#778899" stroke-dasharray="4 3"/>`;
    grid += `<path d="M${right} ${y}h4" stroke="#fff"/>`;
    if (c.prices[i]) over += `<text class="ch-text ch-price" x="${px(c.axisX)}" y="${py(g) + 4}">${c.prices[i]}</text>`;
  });

  for (let x = c.vStart; x < c.frame[1] - 5; x += 96) {
    grid += `<path d="M${px(x) + 0.5} ${top}V${bottom}" stroke="#778899" stroke-dasharray="4 3"/>`;
  }

  c.times.forEach((t, i) => {
    const x = px(c.tickStart + i * 192);
    grid += `<path d="M${x + 0.5} ${bottom}v4" stroke="#fff"/>`;
    over += `<text class="ch-text" x="${x - 1}" y="${bottom + 14}">${t}</text>`;
  });

  c.candles.forEach((k, i) => {
    const x = px(c.first + i * 24);
    candles += `<path d="M${x + 0.5} ${py(k[0])}V${py(k[1])}" stroke="#0f0"/>`;
    const y1 = py(k[2]), y2 = Math.max(py(k[3]), y1 + 2);
    candles += `<rect x="${x - 1.5}" y="${y1 + 0.5}" width="4" height="${y2 - y1}" fill="${k[4] ? "#fff" : "#000"}" stroke="#0f0"/>`;
  });

  if (c.red) {
    over += `<path d="M${left + 1} ${py(c.red) + 0.5}H${right}" stroke="#e01010" stroke-dasharray="12 6 3 6"/>`;
  }

  c.marks.forEach(m => {
    const y = py(m.y);
    over += `<path d="M${left} ${y + 0.5}H${right}" stroke="${m.c}" stroke-width="${m.w || 1}"/>`;
    over += `<rect x="${right + 3}" y="${y - 6}" width="37" height="12" fill="${m.bg}"/>`;
    over += `<text class="ch-text ch-price ch-mark" x="${right + 6}" y="${y + 4}">${m.t}</text>`;
  });

  let label = `<text class="ch-text" x="${px(c.textX)}" y="${py(22) + 4}" xml:space="preserve">${c.head}</text>`;
  c.info.forEach((t, i) => {
    label += `<text class="ch-text" x="${px(c.textX)}" y="${py(c.lines[i]) + 4}">${t}</text>`;
  });
  if (c.extra) {
    label += `<text class="ch-text" x="${px(c.extra[0])}" y="${py(c.extra[1]) + 3}">${c.extra[2]}</text>`;
  }
  const sx = px(c.ea[1]), sy = py(24);
  label += `<text class="ch-text" x="${px(c.ea[0])}" y="${sy + 4}" text-anchor="end">EA_Mark_v2</text>`;
  label += `<g fill="none" stroke="#fff" shape-rendering="auto"><circle cx="${sx}" cy="${sy}" r="4.5"/><path d="M${sx - 2.5} ${sy + 1}a2.8 2.8 0 0 0 5 0M${sx - 1.5} ${sy - 2}v1M${sx + 1.5} ${sy - 2}v1"/></g>`;

  const frame = `<rect x="${left + 0.5}" y="${top + 0.5}" width="${right - left}" height="${bottom - top}" fill="none" stroke="#fff"/>`;
  const plot = `<svg x="${left}" y="${top}" width="${right - left}" height="${bottom - top}" viewBox="${left} ${top} ${right - left} ${bottom - top}">${candles}</svg>`;

  document.getElementById(c.id).innerHTML = grid + plot + over + label + frame;
}

charts.forEach(drawChart);
```
